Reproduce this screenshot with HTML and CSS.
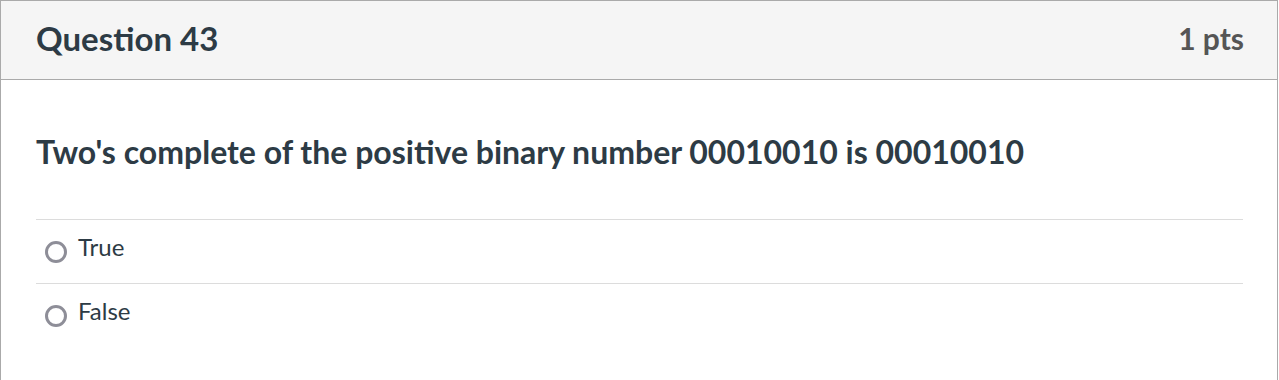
FILE: index.html
```html
<!DOCTYPE html>
<html lang="en">
<head>
    <meta charset="UTF-8">
    <title>Question 43</title>
    <link rel="stylesheet" href="styles.css">
</head>
<body>
    <div class="question">
        <div class="question-header">
            <h2 class="question-title">Question 43</h2>
            <span class="question-points">1 pts</span>
        </div>
        <div class="question-body">
            <p class="question-text">Two's complete of the positive binary number 00010010 is 00010010</p>
            <div class="answers">
                <label class="answer">
                    <span class="radio"></span>
                    <span class="answer-label">True</span>
                </label>
                <label class="answer">
                    <span class="radio"></span>
                    <span class="answer-label">False</span>
                </label>
            </div>
        </div>
    </div>
</body>
</html>
```

FILE: styles.css
```css
body {
    font-family: Lato, "Open Sans", sans-serif;
    margin: 0;
    padding: 0;
    background: #fff;
    color: #2d3b45;
}
.question {
    width: 1278px;
    height: 380px;
    box-sizing: border-box;
    border: 1px solid #aaaaaa;
    border-bottom: none;
}
.question-header {
    display: flex;
    justify-content: space-between;
    align-items: center;
    box-sizing: border-box;
    height: 79px;
    padding: 0 33px 5px 35px;
    background: #f5f5f5;
    border-bottom: 1px solid #aaaaaa;
}
.question-title {
    margin: 0;
    font-size: 33px;
    font-weight: 700;
}
.question-points {
    font-size: 30px;
    font-weight: 700;
    color: #555;
}
.question-body {
    padding: 0 34px 0 35px;
}
.question-text {
    margin: 0;
    padding: 52px 0 48px;
    font-size: 32px;
    font-weight: 700;
}
.answer {
    display: flex;
    align-items: center;
    gap: 11px;
    height: 63px;
    padding-left: 9px;
    border-top: 1px solid #dcdcdc;
}
.radio {
    width: 16px;
    height: 16px;
    border: 3px solid #8e8e98;
    border-radius: 50%;
}
.answer-label {
    padding-bottom: 10px;
    font-size: 24px;
}
```
